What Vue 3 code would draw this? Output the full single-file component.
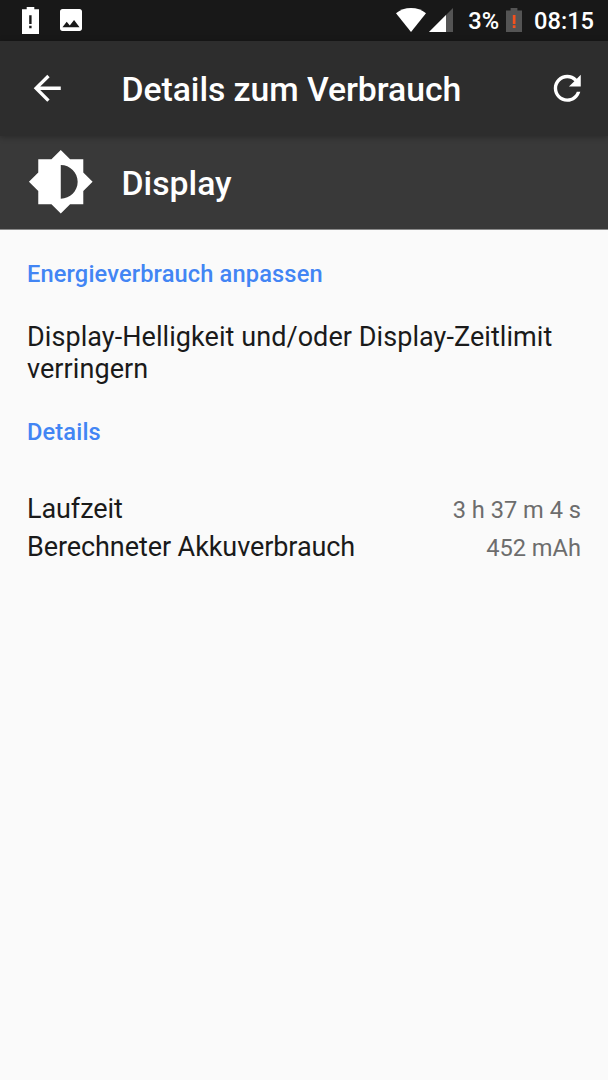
<template>
  <div class="screen">
    <div class="status-bar">
      <svg class="low-battery" viewBox="0 0 17 27">
        <path fill="#fff" fill-rule="evenodd" d="M4.7 0h7.6v2.3H17V27H0V2.3h4.7zM7.2 8.3v8.8h2.4V8.3zM7.2 18.8v2.4h2.4v-2.4z" />
      </svg>
      <svg class="picture" viewBox="3 3 18 18">
        <path fill="#fff" d="M21 19V5c0-1.100-.9-2-2-2H5c-1.100 0-2 .9-2 2v14c0 1.100.9 2 2 2h14c1.100 0 2-.9 2-2zM8.500 13.500l2.500 3.010L14.500 12l4.500 6H5l3.500-4.500z" />
      </svg>
      <svg class="wifi" viewBox="0 0 30 24">
        <path fill="#fff" d="M15 24L0 5.200C4.200 1.900 9.300 0 15 0s10.800 1.900 15 5.200z" />
      </svg>
      <svg class="signal" viewBox="0 0 24 24">
        <path fill="#545454" d="M0 24L24 0v24z" />
        <path fill="#fff" d="M0 24L17 7v17z" />
      </svg>
      <span class="percent">3%</span>
      <svg class="battery" viewBox="0 0 16 24">
        <path fill="#545454" d="M4.600 0h6.800v2.400H16V24H0V2.400h4.600z" />
        <path fill="#f4511e" d="M6.800 7h2.700v8.900H6.800zM6.800 17.200h2.700v2.700H6.800z" />
      </svg>
      <span class="clock">08:15</span>
    </div>

    <div class="toolbar">
      <svg class="back" viewBox="0 0 24 24">
        <path fill="#fff" d="M20 11H7.830l5.590-5.590L12 4l-8 8 8 8 1.410-1.410L7.830 13H20v-2z" />
      </svg>
      <h1>Details zum Verbrauch</h1>
      <svg class="refresh" viewBox="0 0 24 24">
        <path fill="#fff" d="M17.650 6.350C16.200 4.900 14.210 4 12 4c-4.420 0-7.990 3.580-7.990 8s3.570 8 7.990 8c3.730 0 6.840-2.550 7.730-6h-2.080c-.82 2.330-3.040 4-5.650 4-3.310 0-6-2.690-6-6s2.690-6 6-6c1.660 0 3.140.69 4.220 1.780L13 11h7V4l-2.350 2.350z" />
      </svg>
    </div>

    <div class="app-header">
      <svg class="brightness" viewBox="0 0 24 24">
        <path fill="#fff" d="M20 15.310L23.310 12 20 8.690V4h-4.690L12 .69 8.690 4H4v4.690L.69 12 4 15.310V20h4.690L12 23.310 15.310 20H20v-4.690zM12 18V6c3.310 0 6 2.690 6 6s-2.690 6-6 6z" />
      </svg>
      <h2>Display</h2>
    </div>

    <div class="content">
      <h3>Energieverbrauch anpassen</h3>
      <p>Display-Helligkeit und/oder Display-Zeitlimit verringern</p>
      <h3>Details</h3>
      <div class="rows">
        <div v-for="row in rows" :key="row.label" class="row">
          <span class="label">{{ row.label }}</span>
          <span class="value">{{ row.value }}</span>
        </div>
      </div>
    </div>
  </div>
</template>

<script setup>
import { ref } from 'vue';

const rows = ref([
  { label: 'Laufzeit', value: '3 h 37 m 4 s' },
  { label: 'Berechneter Akkuverbrauch', value: '452 mAh' },
]);
</script>

<style>
body {
  margin: 0;
  background: #fafafa;
}
</style>

<style scoped>
.screen {
  height: 1080px;
  overflow: hidden;
  background: #fafafa;
  color: #1a1a1a;
  font-family: Roboto, "Liberation Sans", sans-serif;
}

svg {
  display: block;
  flex: none;
}

h1,
h2,
h3,
p {
  margin: 0;
}

.status-bar {
  display: flex;
  align-items: center;
  box-sizing: border-box;
  height: 40.5px;
  padding: 0 14px 0 22px;
  background: #181818;
  color: #fff;
  font-size: 23.64px;
  font-weight: 500;
  line-height: 28px;
}

.low-battery {
  width: 17px;
  height: 27px;
}

.picture {
  width: 22px;
  height: 22px;
  margin-left: 21px;
}

.wifi {
  width: 30px;
  height: 24px;
  margin-left: auto;
}

.signal {
  width: 24px;
  height: 24px;
  margin-left: 3px;
}

.percent {
  margin-left: 15px;
  padding-top: 2px;
}

.battery {
  width: 16px;
  height: 24px;
  margin-left: 7px;
}

.clock {
  margin-left: 12px;
  padding-top: 2px;
}

.toolbar {
  position: relative;
  display: flex;
  align-items: center;
  box-sizing: border-box;
  height: 95px;
  padding: 0 20.3px 0 27px;
  background: #2d2d2d;
  box-shadow: 0 1px 6px rgba(0, 0, 0, 0.3);
  color: #fff;
}

.back,
.refresh {
  width: 40.53px;
  height: 40.53px;
}

.refresh {
  margin-left: auto;
}

h1,
h2 {
  padding-top: 3px;
  font-size: 33.78px;
  font-weight: 500;
  line-height: 40px;
}

h1 {
  margin-left: 54px;
  letter-spacing: -0.06px;
}

.app-header {
  display: flex;
  align-items: center;
  box-sizing: border-box;
  height: 94px;
  padding-left: 27px;
  border-bottom: 1px solid #8a8a8a;
  background: #393939;
  color: #fff;
}

.brightness {
  width: 67.55px;
  height: 67.55px;
}

h2 {
  margin-left: 27px;
}

.content {
  padding: 30.5px 27px 0;
}

h3 {
  color: #4285f4;
  font-size: 23.64px;
  font-weight: 500;
  letter-spacing: 0.14px;
  line-height: 28px;
}

p {
  margin: 33px 0;
  font-size: 27.02px;
  letter-spacing: 0.06px;
  line-height: 32px;
}

.rows {
  margin-top: 44px;
}

.row {
  display: flex;
  align-items: baseline;
  justify-content: space-between;
  height: 38px;
  line-height: 38px;
}

.label {
  font-size: 27.02px;
  letter-spacing: -0.09px;
}

.value {
  color: #6d6d6d;
  font-size: 23.64px;
}
</style>
